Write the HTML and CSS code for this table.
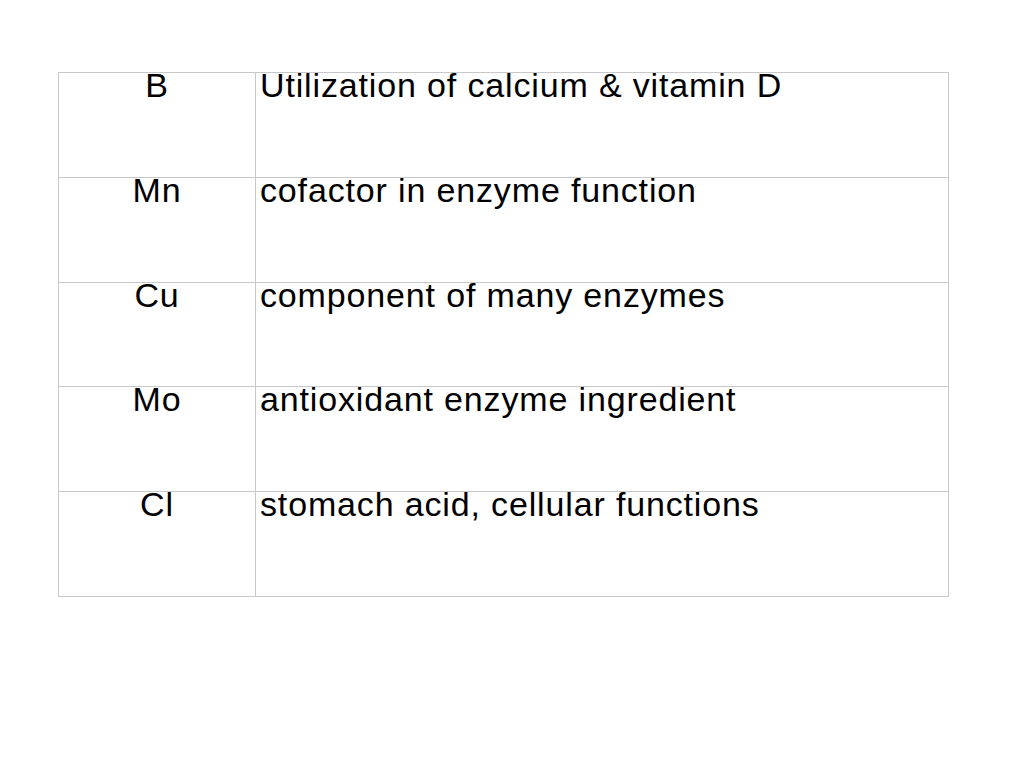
FILE: index.html
```html
<!DOCTYPE html>
<html>
<head>
<meta charset="utf-8">
<link rel="stylesheet" href="styles.css">
</head>
<body>
<div class="table">
  <div class="row r1"><div class="cell sym">B</div><div class="cell desc">Utilization of calcium &amp; vitamin D</div></div>
  <div class="row r2"><div class="cell sym">Mn</div><div class="cell desc">cofactor in enzyme function</div></div>
  <div class="row r3"><div class="cell sym">Cu</div><div class="cell desc">component of many enzymes</div></div>
  <div class="row r4"><div class="cell sym">Mo</div><div class="cell desc">antioxidant enzyme ingredient</div></div>
  <div class="row r5"><div class="cell sym">Cl</div><div class="cell desc">stomach acid, cellular functions</div></div>
</div>
</body>
</html>
```
FILE: styles.css
```css
html, body {
  margin: 0;
  padding: 0;
  background: #ffffff;
}
body {
  font-family: "Liberation Sans", Arial, sans-serif;
  color: #000000;
}
.table {
  margin: 72px 0 0 58px;
  width: 891px;
  box-sizing: border-box;
  border-right: 1px solid #c8c8c8;
  border-bottom: 1px solid #c8c8c8;
}
.row {
  display: grid;
  grid-template-columns: 197px 1fr;
  height: 105px;
  box-sizing: border-box;
}
.row.r3 {
  height: 104px;
}
.cell {
  border-top: 1px solid #c8c8c8;
  border-left: 1px solid #c8c8c8;
  font-size: 34px;
  line-height: 24px;
  letter-spacing: 0.85px;
  padding-top: 0;
}
.sym {
  text-align: center;
}
.desc {
  padding-left: 4px;
}
```
